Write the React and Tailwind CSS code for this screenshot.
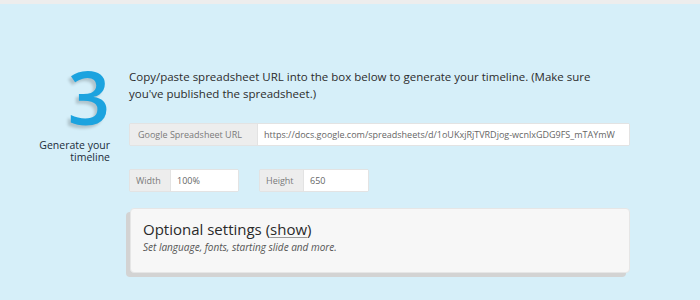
export default function App() {
  return (
    <div className="w-[700px] h-[300px] overflow-hidden bg-[#d6eff9] font-['Open_Sans',sans-serif]">
      <div className="h-[4px] bg-[#ededed]" />
      <div className="flex pt-[64px]">
        <div className="w-[111px] flex flex-col items-end shrink-0">
          <div className="text-[74px] leading-[60px] font-semibold text-[#1ca3df] [text-shadow:-3px_3px_3px_rgba(0,0,0,0.18)] mt-[-1px] mr-[1px]">
            3
          </div>
          <div className="text-right text-[10.5px] leading-[12px] font-medium text-[#1a2c3a] mt-[12px] mr-[1px]">
            <div>Generate your</div>
            <div>timeline</div>
          </div>
        </div>
        <div className="ml-[18px] flex flex-col">
          <p className="w-[480px] text-[11.5px] leading-[17px] text-[#2c2c2c]">
            Copy/paste spreadsheet URL into the box below to generate your timeline. (Make sure
            you've published the spreadsheet.)
          </p>
          <div className="mt-[21px] flex w-[501px] h-[23px] border border-[#e3e3e3] rounded-[2px] text-[9px]">
            <div className="w-[128px] bg-[#ededed] text-[#7a7a7a] flex items-center px-[8px] border-r border-[#e3e3e3]">
              Google Spreadsheet URL
            </div>
            <div className="flex-1 bg-white text-[#666] flex items-center px-[6px]">
              https://docs.google.com/spreadsheets/d/1oUKxjRjTVRDjog-wcnlxGDG9FS_mTAYmW
            </div>
          </div>
          <div className="mt-[23px] flex gap-[20px]">
            <div className="flex w-[110px] h-[23px] border border-[#e3e3e3] rounded-[2px] text-[9px]">
              <div className="w-[41px] bg-[#ededed] text-[#7a7a7a] flex items-center px-[6px] border-r border-[#e3e3e3]">
                Width
              </div>
              <div className="flex-1 bg-white text-[#666] flex items-center px-[6px]">100%</div>
            </div>
            <div className="flex w-[110px] h-[23px] border border-[#e3e3e3] rounded-[2px] text-[9px]">
              <div className="w-[44px] bg-[#ededed] text-[#7a7a7a] flex items-center px-[6px] border-r border-[#e3e3e3]">
                Height
              </div>
              <div className="flex-1 bg-white text-[#666] flex items-center px-[6px]">650</div>
            </div>
          </div>
          <div className="mt-[16px] ml-[1px] w-[500px] h-[65px] bg-[#f7f7f7] border border-[#e6e6e6] rounded-[4px] shadow-[-4px_4px_0_#d3d3d3] px-[12px] pt-[11px]">
            <div className="text-[15px] leading-[19px] text-[#2a2a2a]">
              Optional settings (
              <span className="underline decoration-[#9a9a9a] underline-offset-2">show</span>)
            </div>
            <div className="text-[10px] italic font-normal text-[#555] mt-[1px]">
              Set language, fonts, starting slide and more.
            </div>
          </div>
        </div>
      </div>
    </div>
  );
}
